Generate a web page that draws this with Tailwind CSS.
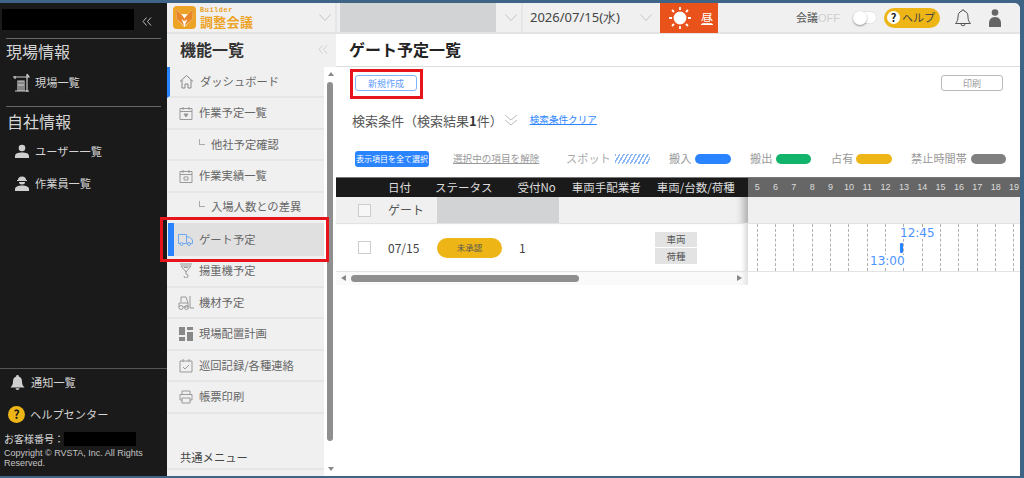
<!DOCTYPE html>
<html lang="ja">
<head>
<meta charset="utf-8">
<script src="https://cdn.jsdelivr.net/npm/@tailwindcss/browser@4"></script>
</head>
<body class="m-0 bg-[#3f6485] overflow-hidden font-['Noto_Sans_CJK_JP','Noto_Sans',sans-serif]">
<div class="relative w-[1024px] h-[478px] pt-[3px] pr-[4px] pb-[2px] overflow-hidden">
<div class="flex h-[473px] w-[1020px] rounded-tr-[6px] overflow-hidden bg-white">

<!-- dark sidebar -->
<aside class="w-[167px] shrink-0 bg-[#1a1a1a] text-[#d4d4d4] flex flex-col">
  <div class="h-[32px] shrink-0 flex items-start pt-[6px] pl-[2px] gap-[8px]">
    <div class="w-[132px] h-[21px] bg-black"></div>
    <svg class="mt-[8px]" width="10" height="9" viewBox="0 0 10 9" fill="none" stroke="#bbb" stroke-width="1"><path d="M4.500 .500 1 4.500l3.500 4M9 .500 5.500 4.500 9 8.500"/></svg>
  </div>
  <div class="mx-[6px] mt-[3px] h-[1px] shrink-0 bg-[#666]"></div>
  <div class="pl-[6px] h-[22px] mt-[1px] shrink-0 flex items-center text-[16px] leading-none">現場情報</div>
  <div class="flex items-center h-[33px] shrink-0 pl-[13px] mt-[4px] text-[11.200px]">
    <svg width="18" height="20" viewBox="0 0 18 20" fill="none" stroke="#cfcfcf" stroke-width="1.200"><path d="M0 4h16L14 1M2 3v3M14 1v18M5 8h6v10H5zM7 8v10M9 8v10M5 12h6M2 18h14"/></svg>
    <span class="ml-[4px]">現場一覧</span>
  </div>
  <div class="mx-[6px] mt-[7px] h-[1px] shrink-0 bg-[#666]"></div>
  <div class="pl-[7px] h-[27px] shrink-0 flex items-center text-[16px] leading-none">自社情報</div>
  <div class="flex items-center h-[30px] shrink-0 pl-[15px] mt-[2px] text-[11.200px]">
    <svg width="14" height="14" viewBox="0 0 14 14" fill="#cfcfcf"><circle cx="7" cy="4" r="3.300"/><path d="M0 14v-2c0-2.500 3-3.500 7-3.500s7 1 7 3.500v2z"/></svg>
    <span class="ml-[6px]">ユーザー一覧</span>
  </div>
  <div class="flex items-center h-[34px] shrink-0 pl-[15px] text-[11.200px]">
    <svg width="14" height="15" viewBox="0 0 14 15" fill="#cfcfcf"><path d="M3 4a4 3.500 0 0 1 8 0h1v1H2V4z"/><path d="M4 6h6a3 2.500 0 0 1-6 0z"/><path d="M0 15v-2c0-2 3-3.500 7-3.500s7 1.500 7 3.500v2z"/></svg>
    <span class="ml-[6px]">作業員一覧</span>
  </div>
  <div class="flex-1"></div>
  <div class="h-[1px] shrink-0 bg-[#555]"></div>
  <div class="flex items-center h-[27px] shrink-0 pl-[10px] text-[11.200px]">
    <svg width="15" height="15" viewBox="0 0 15 15" fill="#cfcfcf"><path d="M7.500 0a1.300 1.300 0 0 1 1.300 1.500C11 2.200 12 4 12 6.500c0 3 1 4.500 2.500 6H.5C2 11 3 9.500 3 6.500 3 4 4 2.200 6.200 1.500A1.300 1.300 0 0 1 7.500 0zM5.500 13.300h4a2 1.700 0 0 1-4 0z"/></svg>
    <span class="ml-[6px]">通知一覧</span>
  </div>
  <div class="flex items-center h-[34px] shrink-0 mt-[1px] pl-[8px] text-[11.200px]">
    <span class="w-[17px] h-[17px] rounded-full bg-[#eeb516] text-[#1a1a1a] flex items-center justify-center text-[12px] font-bold leading-none">?</span>
    <span class="ml-[5px]">ヘルプセンター</span>
  </div>
  <div class="flex items-center h-[16px] shrink-0 pl-[4px] text-[10px] leading-none">お客様番号：<span class="w-[72px] h-[14px] bg-black"></span></div>
  <div class="pl-[4px] pr-[8px] pt-[2px] h-[29px] shrink-0 text-[9px] leading-[9.500px] font-['Liberation_Sans',sans-serif] text-[#c4c4c4]">Copyright © RVSTA, Inc. All Rights Reserved.</div>
</aside>

<div class="flex-1 flex flex-col min-w-0">
  <!-- top bar -->
  <header class="h-[31px] flex shrink-0 bg-[#f0f0f0] border-b-[2px] border-[#e3e3e3] text-[#444]">
    <div class="w-[170px] shrink-0 flex items-center pl-[6px] border-r-[2px] border-[#e6e6e6]">
      <svg width="23" height="23" viewBox="0 0 23 23"><rect width="23" height="23" rx="4" fill="#eda326"/><path d="M3 3l5 5h7l5-5-.5 10-8 8-8-8z" fill="#fff4e0"/><path d="M3 3l5 5 3.500 4.500-.5 7L3.500 13zM20 3l-5 5-3.500 4.500.5 7 7.500-6.500z" fill="#e8862a"/><path d="M8.500 13l3 7 3-7-3 2.500z" fill="#fff"/></svg>
      <div class="ml-[4px] flex flex-col text-[#eda326] font-bold leading-none">
        <span class="text-[7px] h-[7px] tracking-[.5px] font-['Liberation_Mono',monospace]">Builder</span>
        <span class="text-[13px] tracking-[.3px] mt-[1px]">調整会議</span>
      </div>
      <svg class="ml-[66px]" width="12" height="7" viewBox="0 0 12 7" fill="none" stroke="#c4c4c4"><path d="M.5.500 6 6.500 11.500.500"/></svg>
    </div>
    <div class="w-[186px] shrink-0 flex items-center border-r-[2px] border-[#e6e6e6]">
      <div class="w-[156px] h-[29px] self-start ml-[3px] bg-[#d2d3d5]"></div>
      <svg class="ml-[9px]" width="12" height="7" viewBox="0 0 12 7" fill="none" stroke="#c4c4c4"><path d="M.5.500 6 6.500 11.500.500"/></svg>
    </div>
    <div class="w-[137px] shrink-0 flex items-center pl-[7px] text-[13px] font-['Noto_Sans',sans-serif] whitespace-nowrap">
      2026/07/15(水)
      <svg class="ml-[20px]" width="12" height="7" viewBox="0 0 12 7" fill="none" stroke="#c4c4c4"><path d="M.5.500 6 6.500 11.500.500"/></svg>
    </div>
    <div class="w-[58px] shrink-0 h-[30px] bg-[#e9521a] text-white flex items-center pl-[9px] text-[12px]">
      <svg width="22" height="22" viewBox="0 0 22 22" fill="#fff" stroke="#fff" stroke-width="1.800"><circle cx="11" cy="11" r="5.500"/><path d="M11 0v3M11 19v3M0 11h3M19 11h3M3 3l2 2M17 17l2 2M19 3l-2 2M5 17l-2 2"/></svg>
      <span class="ml-[10px] underline underline-offset-1">昼</span>
    </div>
    <div class="flex-1 relative flex items-center pl-[78px]">
      <span class="text-[11px] text-[#555] whitespace-nowrap">会議<span class="text-[#cfcfcf] font-['Liberation_Sans',sans-serif]">OFF</span></span>
      <span class="ml-[13px] relative w-[24px] h-[13px] rounded-full bg-white border border-[#e3e3e3]"><span class="absolute -left-[1px] -top-[1px] w-[14px] h-[14px] rounded-full bg-white shadow-[0_1px_2px_rgba(0,0,0,.4)]"></span></span>
      <span class="ml-[7px] w-[56px] h-[20px] rounded-full bg-[#eeb516] flex items-center pl-[3px] text-[11px] text-[#444] whitespace-nowrap"><span class="w-[13px] h-[13px] rounded-full bg-white text-[#222] flex items-center justify-center text-[11px] font-bold leading-none">?</span><span class="ml-[2px]">ヘルプ</span></span>
      <svg class="ml-[15px]" width="16" height="18" viewBox="0 0 16 18" fill="none" stroke="#555" stroke-width="1"><path d="M8 .8a1 1 0 0 1 1 1.200C12 2.700 13 5 13 8c0 3 1 5 2.500 6.500H.5C2 13 3 11 3 8c0-3 1-5.300 4-6A1 1 0 0 1 8 .8zM6 14.800a2 2 0 0 0 4 0"/></svg>
      <svg class="ml-[18px]" width="12" height="18" viewBox="0 0 12 18" fill="#666"><circle cx="6" cy="3.500" r="3.300"/><path d="M0 18v-4c0-3 2-6 6-6s6 3 6 6v4c-3 .500-9 .500-12 0z"/></svg>
    </div>
  </header>

  <div class="flex flex-1 min-h-0">
    <!-- function menu -->
    <nav class="relative w-[169px] shrink-0 bg-[#f0f0f0] text-[#666] text-[11.300px] flex flex-col overflow-hidden">
      <div class="h-[33px] shrink-0 flex items-center justify-between pl-[13px] pr-[8px] pb-[3px] text-[16px] font-bold text-[#333] leading-none">機能一覧
        <svg width="10" height="9" viewBox="0 0 10 9" fill="none" stroke="#ccc"><path d="M4.500 .500 1 4.500l3.500 4M9 .500 5.500 4.500 9 8.500"/></svg>
      </div>
      <div class="flex flex-1 min-h-0">
        <div class="w-[157px] shrink-0 flex flex-col">
          <a class="h-[31px] shrink-0 flex items-center border-b-[2px] border-[#e6e6e6] border-l-[3px] border-l-[#2a84ff] pl-[9px]">
            <svg width="15" height="15" viewBox="0 0 15 15" fill="none" stroke="#888"><path d="M1 7.500 7.500 1.500 14 7.500M3 6v8h3v-4h3v4h3V6"/></svg>
            <span class="ml-[6px]">ダッシュボード</span></a>
          <a class="h-[31.500px] shrink-0 flex items-center border-b-[2px] border-[#e6e6e6] pl-[12px]">
            <svg width="14" height="14" viewBox="0 0 14 14" fill="none" stroke="#999"><path d="M1 2.500h12v11H1zM1 5.500h12M4 1v3M10 1v3"/><path d="M5 8h4l-2 3z" fill="#999"/></svg>
            <span class="ml-[6px]">作業予定一覧</span></a>
          <a class="h-[31.500px] shrink-0 flex items-center border-b-[2px] border-[#e6e6e6] pl-[32px]"><span class="w-[6px] h-[6px] -mt-[5px] border-l border-b border-[#aaa] mr-[6px]"></span>他社予定確認</a>
          <a class="h-[31.500px] shrink-0 flex items-center border-b-[2px] border-[#e6e6e6] pl-[12px]">
            <svg width="14" height="14" viewBox="0 0 14 14" fill="none" stroke="#999"><path d="M1 2.500h12v11H1zM1 5.500h12M4 1v3M10 1v3M5 8h4v3H5z"/></svg>
            <span class="ml-[6px]">作業実績一覧</span></a>
          <a class="h-[26px] shrink-0 flex items-center pl-[32px] pt-[1px]"><span class="w-[6px] h-[6px] -mt-[5px] border-l border-b border-[#aaa] mr-[6px]"></span>入場人数との差異</a>
          <a class="h-[37px] shrink-0 flex items-end pl-[1px]">
            <span class="w-[6px] h-[33px] bg-[#2a84ff]"></span>
            <span class="flex-1 h-[33px] bg-[#e0e0e0] flex items-center pl-[4px]">
            <svg width="15" height="13" viewBox="0 0 15 13" fill="none" stroke="#6fa8ee"><path d="M.5 1.500h8v9h-8zM8.500 4h3l3 3v3.500h-6z"/><circle cx="3.500" cy="11" r="1.500" fill="#e0e0e0"/><circle cx="11" cy="11" r="1.500" fill="#e0e0e0"/></svg>
            <span class="ml-[6px]">ゲート予定</span></span></a>
          <a class="h-[32px] shrink-0 flex items-center border-b-[2px] border-[#e6e6e6] pl-[12px]">
            <svg width="14" height="15" viewBox="0 0 14 15" fill="none" stroke="#999"><path d="M1 1h12M2 3h10L7 9zM5 4.500h4M7 9v2a2 2 0 1 1-2 2"/></svg>
            <span class="ml-[6px]">揚重機予定</span></a>
          <a class="h-[31.500px] shrink-0 flex items-center border-b-[2px] border-[#e6e6e6] pl-[11px]">
            <svg width="16" height="15" viewBox="0 0 16 15" fill="none" stroke="#999"><path d="M3 7V2h5l2 6v4H5M1 12V8h9M12 1v12h4"/><circle cx="3" cy="12.500" r="2"/><circle cx="8.500" cy="12.500" r="2"/></svg>
            <span class="ml-[5px]">機材予定</span></a>
          <a class="h-[31.500px] shrink-0 flex items-center border-b-[2px] border-[#e6e6e6] pl-[12px]">
            <svg width="14" height="14" viewBox="0 0 14 14" fill="#888"><rect x="0" y="0" width="6" height="8"/><rect x="0" y="10" width="6" height="4"/><rect x="8" y="0" width="6" height="3"/><rect x="8" y="5" width="6" height="9"/></svg>
            <span class="ml-[6px]">現場配置計画</span></a>
          <a class="h-[31.500px] shrink-0 flex items-center border-b-[2px] border-[#e6e6e6] pl-[12px]">
            <svg width="14" height="15" viewBox="0 0 14 15" fill="none" stroke="#999"><path d="M1 3h12v11H1zM4 1v3M10 1v3M4 9l2 2 4-4"/></svg>
            <span class="ml-[6px]">巡回記録/各種連絡</span></a>
          <a class="h-[31.500px] shrink-0 flex items-center border-b-[2px] border-[#e6e6e6] pl-[12px]">
            <svg width="14" height="14" viewBox="0 0 14 14" fill="none" stroke="#999"><path d="M3 4V1h8v3M3 10H1V4.500h12V10h-2M3 8h8v5H3z"/></svg>
            <span class="ml-[6px]">帳票印刷</span></a>
          <div class="h-[34px] shrink-0"></div>
          <div class="h-[22px] shrink-0 pl-[13px] flex items-center text-[#444] border-b-[2px] border-[#e6e6e6]">共通メニュー</div>
        </div>
        <div class="relative flex-1 bg-white">
          <span class="absolute left-[4px] top-[5px] w-0 h-0 border-x-[3px] border-x-transparent border-b-[4px] border-b-[#888]"></span>
          <span class="absolute left-[3px] top-[15px] w-[6px] h-[359px] rounded-full bg-[#8f8f8f]"></span>
          <span class="absolute left-[4px] bottom-[5px] w-0 h-0 border-x-[3px] border-x-transparent border-t-[4px] border-t-[#888]"></span>
        </div>
      </div>
    </nav>

    <!-- main -->
    <main class="relative flex-1 min-w-0 bg-white text-[#555]">
      <div class="h-[33px] border-b border-[#ddd] pl-[13px] pb-[2px] flex items-center text-[16px] font-bold text-[#222] leading-none">ゲート予定一覧</div>
      <div class="flex justify-between pl-[19px] pr-[17px] pt-[8px]">
        <button class="w-[62px] h-[16px] rounded-[3px] border border-[#80b4ff] text-[#5f9dff] text-[9px] leading-none flex items-center justify-center">新規作成</button>
        <button class="w-[62px] h-[16px] rounded-[3px] border border-[#bbb] text-[#999] text-[9px] leading-none flex items-center justify-center">印刷</button>
      </div>
      <div class="flex items-center h-[20px] mt-[19px] pl-[16px] text-[13px] text-[#555] leading-none whitespace-nowrap">
        検索条件（検索結果<b class="text-[#333]">1</b>件）
        <svg class="ml-[1px]" width="14" height="14" viewBox="0 0 14 14" fill="none" stroke="#bbb"><path d="M1 2l6 5 6-5M1 7l6 5 6-5"/></svg>
        <a class="ml-[12px] text-[9.600px] text-[#2a84ff] underline">検索条件クリア</a>
      </div>
      <div class="flex items-center h-[16px] mt-[21px] pl-[19px] text-[#aaa] text-[11.200px] leading-none whitespace-nowrap">
        <span class="w-[74px] h-[16px] shrink-0 rounded-[3px] bg-[#2a84ff] text-white text-[8px] flex items-center justify-center">表示項目を全て選択</span>
        <span class="ml-[24px] w-[87px] shrink-0 text-[9.600px] text-[#999] underline">選択中の項目を解除</span>
        <span class="ml-[26px] w-[45px] shrink-0">スポット</span>
        <span class="ml-[4px] w-[35px] h-[10px] shrink-0" style="background:repeating-linear-gradient(120deg,#8db8f8 0 1.500px,transparent 1.500px 3.500px)"></span>
        <span class="ml-[19px] w-[23px] shrink-0 text-[#999]">搬入</span>
        <span class="ml-[3px] w-[36px] h-[10px] shrink-0 rounded-full bg-[#2a84ff]"></span>
        <span class="ml-[19px] w-[23px] shrink-0 text-[#999]">搬出</span>
        <span class="ml-[3px] w-[35px] h-[10px] shrink-0 rounded-full bg-[#12b36b]"></span>
        <span class="ml-[20px] w-[23px] shrink-0 text-[#999]">占有</span>
        <span class="ml-[2px] w-[36px] h-[10px] shrink-0 rounded-full bg-[#eeb516]"></span>
        <span class="ml-[19px] w-[57px] shrink-0 text-[#999]">禁止時間帯</span>
        <span class="ml-[3px] w-[35px] h-[10px] shrink-0 rounded-full bg-[#808080]"></span>
      </div>
      <!-- table -->
      <div class="mt-[10px] relative">
        <div class="flex h-[20px] border-t border-[#777]">
          <div class="w-[412px] shrink-0 bg-[#1a1a1a] text-[#ddd] text-[11.500px] leading-none flex items-center whitespace-nowrap">
            <span class="ml-[52px]">日付</span><span class="ml-[24px]">ステータス</span><span class="ml-[25px]">受付No</span><span class="ml-[16px]">車両手配業者</span><span class="ml-[16px]">車両/台数/荷種</span>
          </div>
          <div class="flex-1 bg-[#666] text-[#ddd] text-[9px] flex items-center font-['Liberation_Sans',sans-serif]">
            <span class="w-[18.350px] text-center">5</span><span class="w-[18.350px] text-center">6</span><span class="w-[18.350px] text-center">7</span><span class="w-[18.350px] text-center">8</span><span class="w-[18.350px] text-center">9</span><span class="w-[18.350px] text-center">10</span><span class="w-[18.350px] text-center">11</span><span class="w-[18.350px] text-center">12</span><span class="w-[18.350px] text-center">13</span><span class="w-[18.350px] text-center">14</span><span class="w-[18.350px] text-center">15</span><span class="w-[18.350px] text-center">16</span><span class="w-[18.350px] text-center">17</span><span class="w-[18.350px] text-center">18</span><span class="w-[18.350px] text-center">19</span>
          </div>
        </div>
        <div class="flex h-[27px] bg-[#f0f0f0] border-b border-[#e3e3e3]">
          <div class="w-[412px] shrink-0 flex items-center text-[12px] text-[#555] shadow-[inset_-12px_0_8px_-8px_rgba(0,0,0,.3)]">
            <span class="ml-[22px] w-[13px] h-[13px] border border-[#ccc] bg-[#f7f7f7]"></span>
            <span class="ml-[17px] w-[49px]">ゲート</span>
            <span class="w-[122px] h-[26px] bg-[#d2d3d5]"></span>
          </div>
          <div class="flex-1"></div>
        </div>
        <div class="flex h-[48px] border-b border-[#e3e3e3]">
          <div class="w-[412px] shrink-0 flex items-center text-[12px] text-[#444] bg-white shadow-[inset_-6px_0_5px_-3px_rgba(0,0,0,.16)]">
            <span class="ml-[22px] w-[13px] h-[13px] border border-[#ccc] bg-white"></span>
            <span class="ml-[17px] w-[49px]">07/15</span>
            <span class="w-[65px] h-[20px] rounded-full bg-[#eeb516] text-[#555] text-[8.500px] flex items-center justify-center">未承認</span>
            <span class="ml-[17px] w-[136px]">1</span>
            <span class="flex flex-col gap-[1px] text-[9.500px] text-[#555] w-[42px]"><span class="h-[15.500px] bg-[#e3e3e3] flex items-center justify-center">車両</span><span class="h-[15.500px] bg-[#e3e3e3] flex items-center justify-center">荷種</span></span>
          </div>
          <div class="relative flex-1 flex text-[12px] text-[#4d93ff] font-['DejaVu_Sans',sans-serif] leading-none">
            <span class="w-[9.500px] shrink-0 border-r border-dashed border-[#b0b0b0]"></span><span class="w-[18.350px] shrink-0 border-r border-dashed border-[#b0b0b0]"></span><span class="w-[18.350px] shrink-0 border-r border-dashed border-[#b0b0b0]"></span><span class="w-[18.350px] shrink-0 border-r border-dashed border-[#b0b0b0]"></span><span class="w-[18.350px] shrink-0 border-r border-dashed border-[#b0b0b0]"></span><span class="w-[18.350px] shrink-0 border-r border-dashed border-[#b0b0b0]"></span><span class="w-[18.350px] shrink-0 border-r border-dashed border-[#b0b0b0]"></span><span class="w-[18.350px] shrink-0 border-r border-dashed border-[#b0b0b0]"></span><span class="w-[18.350px] shrink-0 border-r border-dashed border-[#b0b0b0]"></span><span class="w-[18.350px] shrink-0 border-r border-dashed border-[#b0b0b0]"></span><span class="w-[18.350px] shrink-0 border-r border-dashed border-[#b0b0b0]"></span><span class="w-[18.350px] shrink-0 border-r border-dashed border-[#b0b0b0]"></span><span class="w-[18.350px] shrink-0 border-r border-dashed border-[#b0b0b0]"></span><span class="w-[18.350px] shrink-0 border-r border-dashed border-[#b0b0b0]"></span><span class="w-[18.350px] shrink-0 border-r border-dashed border-[#b0b0b0]"></span>
            <span class="absolute left-[152px] top-[3px] bg-white">12:45</span>
            <span class="absolute left-[152px] top-[19px] w-[3px] h-[10px] rounded-[1px] bg-[#2a84ff]"></span>
            <span class="absolute left-[122px] top-[31px] bg-white">13:00</span>
          </div>
        </div>
        <div class="flex h-[13px]">
          <div class="w-[412px] shrink-0 relative bg-[#fafafa] shadow-[inset_-8px_0_6px_-5px_rgba(0,0,0,.1)]">
            <span class="absolute left-[5px] top-[3px] w-0 h-0 border-y-[3px] border-y-transparent border-r-[5px] border-r-[#888]"></span>
            <span class="absolute left-[15px] top-[3px] w-[228px] h-[7px] rounded-full bg-[#8f8f8f]"></span>
            <span class="absolute right-[6px] top-[3px] w-0 h-0 border-y-[3px] border-y-transparent border-l-[5px] border-l-[#888]"></span>
          </div>
        </div>
      </div>
    </main>
  </div>
</div>
</div>
<!-- red annotation frames -->
<div class="absolute left-[160px] top-[217px] w-[169px] h-[45px] border-[3px] border-[#e8141c]"></div>
<div class="absolute left-[350px] top-[69px] w-[73px] h-[30px] border-[3px] border-[#e8141c]"></div>
</body>
</html>
